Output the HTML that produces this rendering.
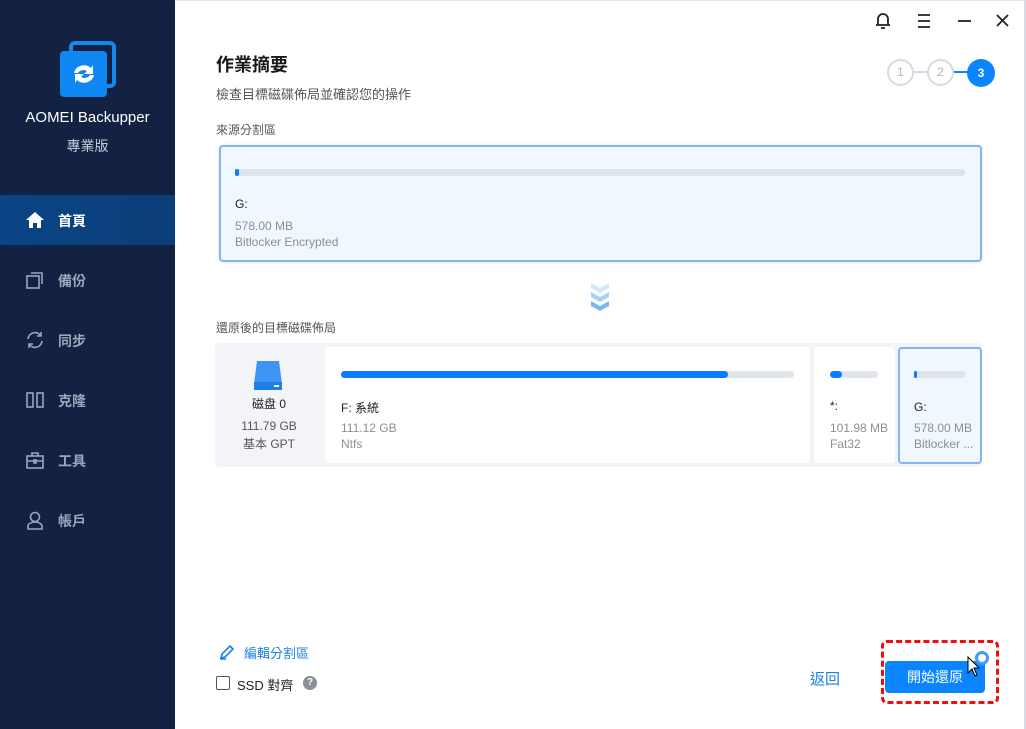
<!DOCTYPE html>
<html><head><meta charset="utf-8"><style>
*{margin:0;padding:0;box-sizing:border-box}
body{width:1026px;height:729px;overflow:hidden;background:#fff;font-family:"Liberation Sans","Noto Sans CJK TC",sans-serif;position:relative}
.a{position:absolute}
.side{left:0;top:0;width:175px;height:729px;background:#132242}
.nav{left:0;width:175px;height:50px;color:#9aa6bb;font-size:14px;font-weight:bold}
.nav span{position:absolute;left:58px;top:16px}
.nav svg{position:absolute;left:25px;top:15px}
.g{color:#8a8f98;font-size:12px}
.bar{height:7px;border-radius:4px;background:#dfe3ea}
.bar i{display:block;height:7px;border-radius:4px;background:#0a7cff}
.card{background:#fff;border-radius:4px}
.t{font-size:12px;color:#222}
</style></head><body>
<div class="a side"></div>
<div class="a" style="left:175px;top:0;width:851px;height:729px;border-right:2px solid #d9dce2;border-top:1px solid #e5e7eb"></div>
<div class="a" style="left:69px;top:41px;width:47px;height:47px;border:4px solid #1588f0;border-radius:6px"></div>
<div class="a" style="left:60px;top:51px;width:47px;height:46px;background:#0f86f2;border-radius:4px"></div>
<svg class="a" style="left:68px;top:58px" width="32" height="32" viewBox="0 0 32 32"><path d="M6 15a10 9 0 0 1 17-5l2-3v9h-9l3-3a6 5 0 0 0-9 2z" fill="#fff"/><path d="M26 17a10 9 0 0 1-17 5l-2 3v-9h9l-3 3a6 5 0 0 0 9-2z" fill="#fff"/></svg>
<div class="a" style="left:0;width:175px;top:109px;text-align:center;color:#fff;font-size:15px">AOMEI Backupper</div>
<div class="a" style="left:0;width:175px;top:136px;text-align:center;color:#c5ccd8;font-size:14px">專業版</div>
<div class="a nav" style="top:195px;background:linear-gradient(90deg,#0b4585,#0b3d78);color:#fff"><svg width="20" height="20" viewBox="0 0 20 20"><path d="M10 2L1 10h3v8h4v-5h4v5h4v-8h3z" fill="#fff"/></svg><span>首頁</span></div>
<div class="a nav" style="top:255px"><svg width="20" height="20" viewBox="0 0 20 20" fill="none" stroke="#9aa6bb" stroke-width="1.6"><rect x="2" y="6" width="12" height="12"/><path d="M6 3h11v11"/></svg><span>備份</span></div>
<div class="a nav" style="top:315px"><svg width="20" height="20" viewBox="0 0 20 20" fill="none" stroke="#9aa6bb" stroke-width="1.6"><path d="M3 9a7 7 0 0 1 13-3M17 11a7 7 0 0 1-13 3"/><path d="M16 2v4h-4M4 18v-4h4"/></svg><span>同步</span></div>
<div class="a nav" style="top:375px"><svg width="20" height="20" viewBox="0 0 20 20" fill="none" stroke="#9aa6bb" stroke-width="1.6"><rect x="2" y="3" width="6" height="14"/><rect x="12" y="3" width="6" height="14"/></svg><span>克隆</span></div>
<div class="a nav" style="top:435px"><svg width="20" height="20" viewBox="0 0 20 20" fill="none" stroke="#9aa6bb" stroke-width="1.6"><rect x="2" y="6" width="16" height="12"/><path d="M7 6V3h6v3M2 11h16"/><rect x="9" y="10" width="2" height="3"/></svg><span>工具</span></div>
<div class="a nav" style="top:495px"><svg width="20" height="20" viewBox="0 0 20 20" fill="none" stroke="#9aa6bb" stroke-width="1.6"><circle cx="10" cy="7" r="4.5"/><path d="M3 19v-3c0-2 3-4 7-4s7 2 7 4v3z"/></svg><span>帳戶</span></div>
<svg class="a" style="left:874px;top:11px" width="140" height="20" viewBox="0 0 140 20" fill="none" stroke="#222" stroke-width="1.8"><path d="M4 14V8a5 5 0 0 1 10 0v6zM2 14h14M7 17h4"/><path d="M44 4h12M44 10h12M44 16h12"/><path d="M84 10h13"/><path d="M123 4l11 11M134 4l-11 11"/></svg>
<div class="a" style="left:912px;top:71px;width:17px;height:2px;background:#d5dbe4"></div>
<div class="a" style="left:952px;top:71px;width:16px;height:2px;background:#0a84ff"></div>
<div class="a" style="left:887px;top:59px;width:27px;height:27px;border:2px solid #d5dbe4;border-radius:50%;text-align:center;line-height:23px;font-size:12px;color:#b0b6c0;background:#fff">1</div>
<div class="a" style="left:927px;top:59px;width:27px;height:27px;border:2px solid #d5dbe4;border-radius:50%;text-align:center;line-height:23px;font-size:12px;color:#b0b6c0;background:#fff">2</div>
<div class="a" style="left:967px;top:59px;width:28px;height:28px;border-radius:50%;text-align:center;line-height:28px;font-size:12px;color:#fff;background:#0a84ff;font-weight:bold">3</div>
<div class="a" style="left:216px;top:51px;font-size:18px;font-weight:bold;color:#1a1a1a">作業摘要</div>
<div class="a" style="left:216px;top:84px;font-size:13px;color:#555">檢查目標磁碟佈局並確認您的操作</div>
<div class="a g" style="left:216px;top:121px;color:#555">來源分割區</div>
<div class="a" style="left:219px;top:145px;width:763px;height:117px;border:2px solid #84b4f4;border-radius:4px;background:#f1f7ff;box-shadow:0 0 3px #e0e6ee"></div>
<div class="a bar" style="left:235px;top:169px;width:730px"><i style="width:4px"></i></div>
<div class="a t" style="left:235px;top:197px">G:</div>
<div class="a g" style="left:235px;top:219px">578.00 MB</div>
<div class="a g" style="left:235px;top:235px">Bitlocker Encrypted</div>
<svg class="a" style="left:590px;top:282px" width="20" height="30" viewBox="0 0 20 30"><path d="M1 1l9 5 9-5v5l-9 5-9-5z" fill="#d3e8fb"/><path d="M1 10l9 5 9-5v5l-9 5-9-5z" fill="#a9d2f8"/><path d="M1 19l9 5 9-5v5l-9 5-9-5z" fill="#78b8f4"/></svg>
<div class="a g" style="left:216px;top:319px;color:#555">還原後的目標磁碟佈局</div>
<div class="a" style="left:215px;top:343px;width:767px;height:124px;background:#f3f4f7;border-radius:4px"></div>
<svg class="a" style="left:252px;top:360px" width="32" height="32" viewBox="0 0 32 32"><path d="M5 1h22l3 23H2z" fill="#3d96f3"/><rect x="2" y="22" width="28" height="8" fill="#1f7fe8"/><rect x="22" y="25" width="5" height="2" fill="#fff"/></svg>
<div class="a" style="left:215px;top:395px;width:108px;text-align:center;font-size:12px;color:#222">磁盘 0</div>
<div class="a" style="left:215px;top:419px;width:108px;text-align:center;font-size:12px;color:#555">111.79 GB</div>
<div class="a" style="left:215px;top:435px;width:108px;text-align:center;font-size:12px;color:#555">基本 GPT</div>
<div class="a card" style="left:325px;top:347px;width:485px;height:116px"></div>
<div class="a bar" style="left:341px;top:371px;width:453px"><i style="width:387px"></i></div>
<div class="a t" style="left:341px;top:399px">F: 系統</div>
<div class="a g" style="left:341px;top:421px">111.12 GB</div>
<div class="a g" style="left:341px;top:437px">Ntfs</div>
<div class="a card" style="left:814px;top:347px;width:81px;height:116px"></div>
<div class="a bar" style="left:830px;top:371px;width:48px"><i style="width:12px"></i></div>
<div class="a t" style="left:830px;top:399px">*:</div>
<div class="a g" style="left:830px;top:421px">101.98 MB</div>
<div class="a g" style="left:830px;top:437px">Fat32</div>
<div class="a" style="left:898px;top:347px;width:84px;height:117px;border:2px solid #84b4f4;border-radius:4px;background:#f1f7ff"></div>
<div class="a bar" style="left:914px;top:371px;width:51px"><i style="width:3px"></i></div>
<div class="a t" style="left:914px;top:400px">G:</div>
<div class="a g" style="left:914px;top:421px">578.00 MB</div>
<div class="a g" style="left:914px;top:437px;white-space:nowrap">Bitlocker ...</div>
<svg class="a" style="left:219px;top:644px" width="16" height="16" viewBox="0 0 16 16" fill="none" stroke="#1a7fe8" stroke-width="1.6"><path d="M2 14l1-4 8-8 3 3-8 8z M1 15h6"/></svg>
<div class="a" style="left:244px;top:643px;font-size:13px;color:#1a7fe8">編輯分割區</div>
<div class="a" style="left:216px;top:676px;width:14px;height:14px;border:1.5px solid #555;border-radius:2px"></div>
<div class="a" style="left:237px;top:675px;font-size:13px;color:#222">SSD 對齊</div>
<div class="a" style="left:303px;top:676px;width:14px;height:14px;border-radius:50%;background:#8a8f98;color:#fff;font-size:10px;text-align:center;line-height:14px;font-weight:bold">?</div>
<div class="a" style="left:810px;top:668px;font-size:15px;color:#1a7fe8">返回</div>
<div class="a" style="left:881px;top:640px;width:118px;height:64px;border:3px dashed #f20d0d;border-radius:6px"></div>
<div class="a" style="left:885px;top:661px;width:100px;height:32px;background:#0a84ff;border-radius:4px;color:#fff;font-size:14px;text-align:center;line-height:32px">開始還原</div>
<div class="a" style="left:975px;top:651px;width:14px;height:14px;border:3px solid #3d9ef3;border-radius:50%;background:#fff"></div>
<svg class="a" style="left:967px;top:656px" width="14" height="22" viewBox="0 0 14 22"><path d="M1 1v16l4-4 3 7 2-1-3-7h5z" fill="#fff" stroke="#000" stroke-width="1"/></svg>
</body></html>
